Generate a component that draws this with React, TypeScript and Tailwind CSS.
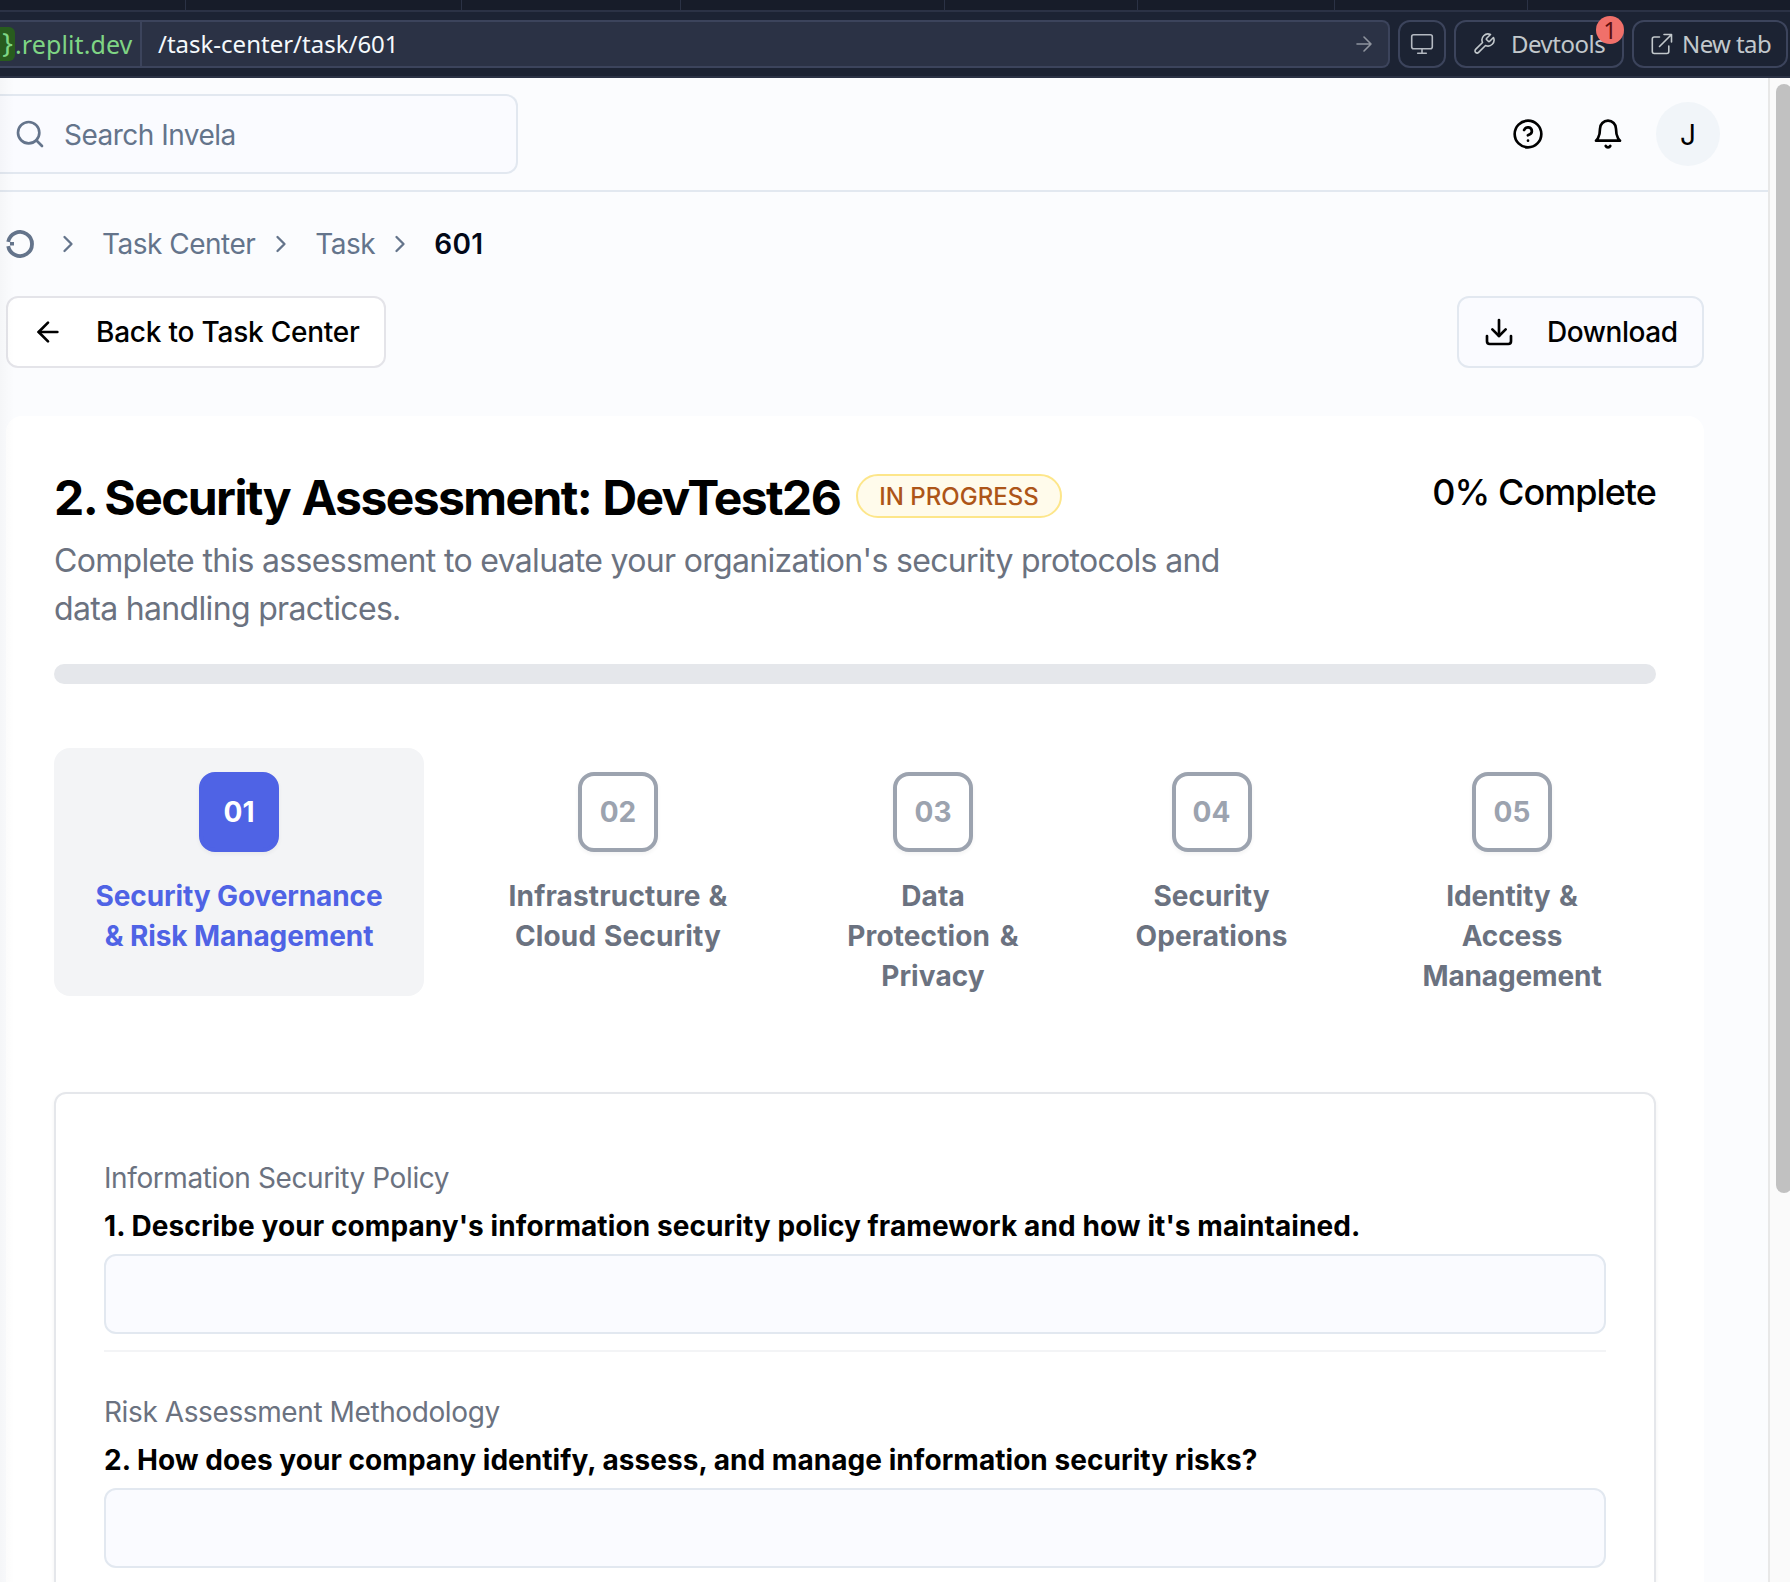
import React from "react";

const INTER = "font-['Inter','Liberation_Sans',sans-serif]";

const steps = [
  { n: "01", lines: ["Security Governance", "& Risk Management"], w: "w-[370px]", t: "tracking-[-0.1px]", active: true },
  { n: "02", lines: ["Infrastructure &", "Cloud Security"], w: "w-[324px]", t: "tracking-[0.15px] [word-spacing:1px]", active: false },
  { n: "03", lines: ["Data", "Protection &", "Privacy"], w: "w-[242px]", t: "tracking-[0.1px] [word-spacing:3px]", active: false },
  { n: "04", lines: ["Security", "Operations"], w: "w-[251px]", t: "tracking-[0.05px]", active: false },
  { n: "05", lines: ["Identity &", "Access", "Management"], w: "w-[286px]", t: "tracking-[-0.12px] [word-spacing:2px]", active: false },
];

const questions = [
  { topic: "Information Security Policy", text: "1. Describe your company's information security policy framework and how it's maintained.", t: "tracking-[0.09px]" },
  { topic: "Risk Assessment Methodology", text: "2. How does your company identify, assess, and manage information security risks?", t: "tracking-[0.05px]" },
];

const tabs = ["w-[186px]", "w-[276px]", "w-[219px]", "w-[264px]", "w-[193px]", "w-[197px]", "w-[193px]"];

function Icon({ size, stroke = 2, className = "", children }: { size: number; stroke?: number; className?: string; children: React.ReactNode }) {
  return (
    <svg width={size} height={size} viewBox="0 0 24 24" fill="none" stroke="currentColor" strokeWidth={stroke} strokeLinecap="round" strokeLinejoin="round" className={"shrink-0 " + className}>
      {children}
    </svg>
  );
}

function Chevron({ className = "" }: { className?: string }) {
  return (
    <Icon size={28} className={className}>
      <path d="m9 18 6-6-6-6" />
    </Icon>
  );
}

function BrowserBar() {
  return (
    <div className="shrink-0 bg-[#1c2333] font-['Noto_Sans',sans-serif]">
      <div className="flex h-3 border-b-2 border-[#2b3245] bg-[#171c29]">
        {tabs.map((w, i) => (
          <div key={i} className={w + " shrink-0 border-r border-[#2b3245]"} />
        ))}
      </div>
      <div className="flex h-[66px] items-center gap-2 border-b-2 border-[#2b3245]">
        <div className="flex h-12 w-[1390px] shrink-0 items-center overflow-hidden rounded-r-lg border-y-2 border-r-2 border-[#3c445c] bg-[#2b3245]">
          <div className="flex h-full w-[142px] shrink-0 items-center border-r-2 border-[#3c445c] text-2xl text-[#7fd584]">
            <span className="flex h-[34px] w-[15px] shrink-0 items-center justify-end rounded-r-md bg-[#285c1e] pr-[2px] pb-0.5 text-[28px]">{"}"}</span>
            <span className="whitespace-nowrap pt-px text-[25px] tracking-[0.1px]">.replit.dev</span>
          </div>
          <span className="ml-4 grow whitespace-nowrap text-2xl text-[#f5f9fc]">/task-center/task/601</span>
          <svg width="16" height="16" viewBox="0 0 16 16" fill="none" stroke="#8f949e" strokeWidth="1.6" strokeLinecap="round" strokeLinejoin="round" className="mr-4">
            <path d="M1 8h14M8 1l7 7-7 7" />
          </svg>
        </div>
        <div className="flex h-12 w-12 shrink-0 items-center justify-center rounded-xl border-2 border-[#3c445c] text-[#b4b9c1]">
          <svg width="24" height="22" viewBox="0 0 24 22" fill="none" stroke="currentColor" strokeWidth="1.6" strokeLinecap="round" strokeLinejoin="round">
            <rect x="1.7" y="1.7" width="20.6" height="14" rx="2" />
            <path d="M12 16v4.2M7.7 20.3h8.6" />
          </svg>
        </div>
        <div className="relative flex h-12 w-[170px] shrink-0 items-center rounded-xl border-2 border-[#3c445c] pl-4 text-[#c2c8cc]">
          <Icon size={24} stroke={1.6}>
            <path d="M14.7 6.3a1 1 0 0 0 0 1.4l1.6 1.6a1 1 0 0 0 1.4 0l3.77-3.77a6 6 0 0 1-7.94 7.94l-6.91 6.91a2.12 2.12 0 0 1-3-3l6.91-6.91a6 6 0 0 1 7.94-7.94l-3.76 3.76z" />
          </Icon>
          <span className="ml-[15px] text-2xl tracking-[-0.5px]">Devtools</span>
          <span className="absolute -top-1.5 -right-0.5 flex h-7 w-7 items-center justify-center rounded-full bg-[#f0706a] text-2xl leading-none text-[#5c0f0f]">1</span>
        </div>
        <div className="flex h-12 w-[156px] shrink-0 items-center rounded-xl border-2 border-[#3c445c] pl-4 text-[#c2c8cc]">
          <svg width="24" height="24" viewBox="0 0 24 24" fill="none" stroke="currentColor" strokeWidth="1.6" strokeLinecap="round" strokeLinejoin="round">
            <path d="M9.5 5H4.300a2 2 0 0 0-2 2v12.500a2 2 0 0 0 2 2h12.500a2 2 0 0 0 2-2v-5.500M14 2.500h7.500V10M21.500 2.500 9.500 14.500" />
          </svg>
          <span className="ml-2 whitespace-nowrap text-2xl tracking-[-0.6px]">New tab</span>
        </div>
      </div>
    </div>
  );
}

function Header() {
  return (
    <header className="flex h-[114px] shrink-0 items-center justify-between border-b-2 border-[#e2e8f0] pr-12">
      <div className="flex h-20 w-[518px] items-center rounded-r-xl border-y-2 border-r-2 border-[#e2e8f0] bg-[#fafbff] pl-3.5 text-[#64748b]">
        <Icon size={32}>
          <circle cx="11" cy="11" r="8" />
          <path d="m21 21-4.300-4.300" />
        </Icon>
        <span className="ml-[18px] pt-0.5 text-[28px] tracking-[-0.52px]">Search Invela</span>
      </div>
      <div className="flex items-center text-black">
        <Icon size={32}>
          <circle cx="12" cy="12" r="10" />
          <path d="M9.090 9a3 3 0 0 1 5.830 1c0 2-3 3-3 3" />
          <path d="M12 17h.01" />
        </Icon>
        <Icon size={32} className="ml-12">
          <path d="M6 8a6 6 0 0 1 12 0c0 7 3 9 3 9H3s3-2 3-9" />
          <path d="M10.300 21a1.940 1.940 0 0 0 3.400 0" />
        </Icon>
        <div className="ml-8 flex h-16 w-16 items-center justify-center rounded-full bg-[#f1f5f9] pt-0.5 text-[28px]">J</div>
      </div>
    </header>
  );
}

function Breadcrumb() {
  return (
    <nav className="flex h-10 items-center text-[28px] leading-10 tracking-[-0.5px] text-[#64748b]">
      <svg width="28" height="28" viewBox="0 0 28 28" fill="none" className="shrink-0">
        <path d="M2.200 11.900A12 12 0 1 1 2.200 16.100" stroke="currentColor" strokeWidth="3.800" />
        <path d="M4 12h4v3.500h-4z" fill="currentColor" />
      </svg>
      <Chevron className="ml-5" />
      <span className="ml-5">Task Center</span>
      <Chevron className="ml-3" />
      <span className="ml-5">Task</span>
      <Chevron className="ml-[11px]" />
      <span className="ml-5 font-semibold tracking-[0.3px] text-[#020817]">601</span>
    </nav>
  );
}

function Actions() {
  return (
    <div className="mt-8 flex justify-between text-[28px] font-medium leading-10 text-black">
      <button className="flex h-18 w-[380px] items-center whitespace-nowrap rounded-xl border-2 border-[#e4e4e9] bg-white pl-6">
        <Icon size={32}>
          <path d="m12 19-7-7 7-7" />
          <path d="M19 12H5" />
        </Icon>
        <span className="ml-8 tracking-[-0.22px]">Back to Task Center</span>
      </button>
      <button className="flex h-18 w-[247px] items-center whitespace-nowrap rounded-xl border-2 border-[#e2e8f0] bg-[#fafbff] pl-6">
        <Icon size={32}>
          <path d="M21 15v4a2 2 0 0 1-2 2H5a2 2 0 0 1-2-2v-4" />
          <path d="m7 10 5 5 5-5" />
          <path d="M12 15V3" />
        </Icon>
        <span className="ml-8 tracking-[-0.45px]">Download</span>
      </button>
    </div>
  );
}

function Steps() {
  return (
    <div className="mt-16 flex gap-8">
      {steps.map((s) => (
        <div key={s.n} className={s.w + " flex h-[248px] shrink-0 flex-col items-center rounded-2xl pt-6 " + (s.active ? "bg-[#f3f4f6] text-[#4f63e5]" : "text-[#6b7280]")}>
          <div className={"flex h-20 w-20 items-center justify-center rounded-2xl border-4 text-[28px] font-bold leading-10 shadow-[0_2px_4px_rgba(0,0,0,0.05)] " + (s.active ? "border-[#4f63e5] bg-[#4f63e5] text-white" : "border-[#9ca3af] bg-white text-[#9ca3af]")}>
            {s.n}
          </div>
          <div className={"mt-6 text-center text-[28px] font-bold leading-10 " + s.t}>
            {s.lines.map((l) => (
              <div key={l} className="whitespace-nowrap">{l}</div>
            ))}
          </div>
        </div>
      ))}
    </div>
  );
}

function Questions() {
  return (
    <div className="mt-24 h-[700px] rounded-xl border-2 border-[#e5e7eb] px-12 pt-16 text-[28px] leading-10 shadow-[0_2px_4px_rgba(0,0,0,0.05)]">
      {questions.map((q) => (
        <div key={q.topic} className="mb-10 border-b-2 border-[#f3f4f6] pb-4">
          <div className="tracking-[-0.4px] text-[#6b7280]">{q.topic}</div>
          <div className={"mt-2 whitespace-nowrap font-bold text-black " + q.t}>{q.text}</div>
          <div className="mt-2 h-20 rounded-xl border-2 border-[#e2e8f0] bg-[#fafbff]" />
        </div>
      ))}
    </div>
  );
}

export default function App() {
  return (
    <div className={"flex h-[1582px] w-[1790px] flex-col overflow-hidden bg-[#fbfcfe] " + INTER}>
      <BrowserBar />
      <div className="relative flex min-h-0 grow">
        <div className="w-[1768px] shrink-0">
          <Header />
          <main className="pt-8 pr-16 pl-1.5">
            <Breadcrumb />
            <Actions />
            <section className="mt-12 rounded-2xl bg-white p-12">
              <div className="flex items-start justify-between">
                <div>
                  <div className="flex h-16 items-center">
                    <h1 className="w-[784px] whitespace-nowrap pt-[3px] text-5xl font-bold leading-[64px] tracking-[-1.6px] text-black [word-spacing:1.5px]">
                      <span className="[word-spacing:-1px]">2. </span>Security Assessment: DevTest26
                    </h1>
                    <span className="ml-[18px] flex h-11 w-[206px] items-center justify-center rounded-full border-2 border-[#fde68a] bg-[#fffbeb] pt-0.5 text-2xl font-medium text-[#ad5518]">IN PROGRESS</span>
                  </div>
                  <p className="mt-[9px] whitespace-nowrap text-[32px] leading-[48px] tracking-[-0.67px] text-[#6b7280]">
                    Complete this assessment to evaluate your organization's security protocols and
                    <br />
                    data handling practices.
                  </p>
                </div>
                <div className="whitespace-nowrap text-4xl font-medium leading-[56px] tracking-[-0.95px] text-black">0% Complete</div>
              </div>
              <div className="mt-[31px] h-5 rounded-full bg-[#e5e7eb]" />
              <Steps />
              <Questions />
            </section>
          </main>
        </div>
        <div className="flex grow overflow-hidden border-l-2 border-[#e8e8e8] bg-[#fafafa] pt-1.5 pl-1.5">
          <div className="h-[1109px] w-4 shrink-0 rounded-full bg-[#c1c1c1]" />
        </div>
        <div className="absolute inset-y-0 left-0 w-3.5 bg-gradient-to-r from-black/[0.025] to-transparent" />
      </div>
    </div>
  );
}
